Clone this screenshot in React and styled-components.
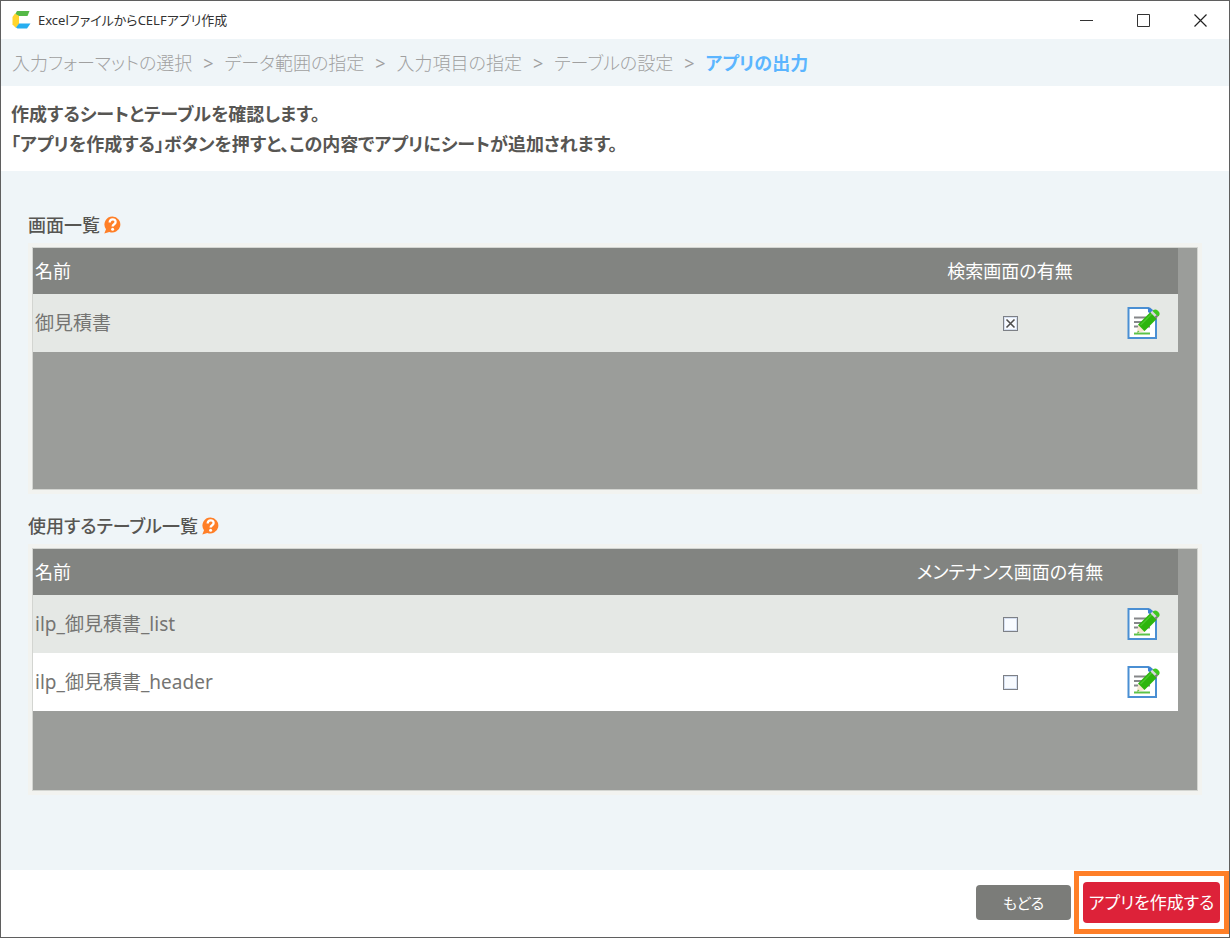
import { useState } from "react";
import styled, { createGlobalStyle } from "styled-components";

const COLOR = {
  FRAME: "#5f5f5f",
  WHITE: "#ffffff",
  PALE: "#eff5f8",
  MUTED: "#a0a0a0",
  ACTIVE: "#5bb5ff",
  TEXT: "#575653",
  CELL: "#757573",
  HEADER: "#828481",
  EMPTY: "#9b9d9a",
  ROW: "#e5e8e5",
  ORANGE: "#ff7f27",
  RED: "#dd2239",
  GRAY: "#7b7c79",
};

const GlobalStyle = createGlobalStyle`
  * {
    box-sizing: border-box;
  }
  body {
    margin: 0;
    font-family: "Noto Sans", "Noto Sans CJK JP", sans-serif;
    font-feature-settings: "palt";
    color: ${COLOR.TEXT};
  }
  button {
    font: inherit;
    font-feature-settings: inherit;
    border: 0;
    padding: 0;
    background: none;
    cursor: pointer;
  }
`;

const Window = styled.div`
  display: flex;
  flex-direction: column;
  min-height: 100vh;
  border: 1px solid ${COLOR.FRAME};
  background: ${COLOR.WHITE};
`;

const TitleBar = styled.header`
  display: flex;
  align-items: center;
  height: 38px;
  padding-left: 11px;
  gap: 7px;
`;

const Title = styled.h1`
  flex: 1;
  margin: 0;
  font-size: 13px;
  font-weight: 400;
  line-height: 20px;
  color: #333333;
`;

const WindowButton = styled.button`
  display: flex;
  align-items: center;
  justify-content: center;
  width: 57px;
  height: 36px;
`;

const WindowButtons = styled.div`
  display: flex;
`;

const Breadcrumb = styled.nav`
  display: flex;
  align-items: center;
  gap: 11px;
  height: 47px;
  padding: 0 11px;
  background: ${COLOR.PALE};
  font-size: 18px;
  line-height: 28px;
  color: ${COLOR.MUTED};
`;

const Step = styled.span`
  color: ${({ $active }) => ($active ? COLOR.ACTIVE : "inherit")};
  font-weight: ${({ $active }) => ($active ? 700 : 300)};
`;

const Message = styled.p`
  margin: 0;
  padding: 13px 10px 12px;
  font-size: 18px;
  font-weight: 700;
  line-height: 30px;
`;

const Main = styled.main`
  display: flex;
  flex: 1;
  flex-direction: column;
  gap: 18px;
  padding: 40px 27px;
  background: ${COLOR.PALE};
`;

const SectionTitle = styled.h2`
  display: flex;
  align-items: center;
  gap: 4px;
  margin: 0 0 4px;
  font-size: 18px;
  font-weight: 500;
  line-height: 28px;
`;

const Panel = styled.div`
  min-height: 251px;
  border: 4px solid #f2f3f0;
`;

const PanelBody = styled.div`
  min-height: 243px;
  padding-right: 19px;
  border: 1px solid #d3d5d1;
  background: ${COLOR.EMPTY};
`;

const Table = styled.table`
  width: 100%;
  border-collapse: collapse;
  table-layout: fixed;
  font-size: 18px;
  line-height: 28px;
`;

const HeadCell = styled.th`
  width: ${({ $width }) => $width || "auto"};
  height: 46px;
  padding: 0 2px;
  background: ${COLOR.HEADER};
  color: ${COLOR.WHITE};
  font-weight: 400;
  text-align: ${({ $align }) => $align || "left"};
  white-space: nowrap;
`;

const Row = styled.tr`
  background: ${COLOR.WHITE};
  &:nth-child(odd) {
    background: ${COLOR.ROW};
  }
`;

const Cell = styled.td`
  height: 58px;
  padding: 0 2px;
  color: ${COLOR.CELL};
  font-size: 19px;
`;

const CheckWrapper = styled.label`
  display: grid;
  width: 15px;
  margin: 0 auto;
  > * {
    grid-area: 1 / 1;
  }
  svg {
    pointer-events: none;
  }
`;

const CheckInput = styled.input`
  appearance: none;
  width: 15px;
  height: 15px;
  margin: 0;
  border: 1px solid #7d8086;
  background: #f8fbff;
  box-shadow: inset 0 0 0 1px #d5dff0;
`;

const EditButton = styled.button`
  display: flex;
  margin: 0 auto;
`;

const Footer = styled.footer`
  display: flex;
  align-items: center;
  justify-content: flex-end;
  gap: 3px;
  padding: 1px 0 3px;
`;

const Highlight = styled.div`
  padding: 6px 4px;
  border: 5px solid ${COLOR.ORANGE};
`;

const Button = styled.button`
  min-width: ${({ $primary }) => ($primary ? "137px" : "95px")};
  height: ${({ $primary }) => ($primary ? "41px" : "35px")};
  border-radius: 4px;
  background: ${({ $primary }) => ($primary ? COLOR.RED : COLOR.GRAY)};
  color: ${COLOR.WHITE};
  font-size: ${({ $primary }) => ($primary ? "17px" : "15px")};
  line-height: 28px;
`;

const steps = [
  "入力フォーマットの選択",
  "データ範囲の指定",
  "入力項目の指定",
  "テーブルの設定",
  "アプリの出力",
];

const sections = [
  {
    id: "screens",
    title: "画面一覧",
    option: "検索画面の有無",
    rows: [{ name: "御見積書", checked: true }],
  },
  {
    id: "tables",
    title: "使用するテーブル一覧",
    option: "メンテナンス画面の有無",
    rows: [
      { name: "ilp_御見積書_list", checked: false },
      { name: "ilp_御見積書_header", checked: false },
    ],
  },
];

const Logo = () => (
  <svg width="19" height="19" viewBox="0 0 19 19" aria-hidden="true">
    <path d="M5 0h12.500l-2 5H6.500L3 3.500z" fill="#55b947" />
    <path d="M3 2.500l4 2.500v8l-3 4L0.500 13.500V6z" fill="#ffd52e" />
    <path d="M7 12.500h11.500l-3.500 5H5.500L4 16.500z" fill="#27aef0" />
  </svg>
);

const HelpIcon = () => (
  <svg width="17" height="18" viewBox="0 0 17 18" aria-hidden="true">
    <path
      d="M8.500 0.500a8 8 0 1 1-3.200 15.400L0.300 17.500l1.700-4.300A8 8 0 0 1 8.500 0.500z"
      fill={COLOR.ORANGE}
    />
    <path
      d="M5.700 6.500c0-4.200 5.900-4.200 5.900-.5 0 2.400-3 2-3 4.500"
      fill="none"
      stroke="#fff"
      strokeWidth="2.300"
    />
    <circle cx="8.600" cy="13.200" r="1.500" fill="#fff" />
  </svg>
);

const EditIcon = () => (
  <svg width="34" height="34" viewBox="0 0 34 34" aria-hidden="true">
    <path d="M2.500 2H22l8 8v22H2.500z" fill="#fff" stroke="#4a8fd3" strokeWidth="2" />
    <path d="M22 1.500h2l3.500 3-2.500 3.500-3-2z" fill="#3f83d0" />
    <path d="M8 11.500h12M8 16h9M8 20.500h5M20 20.500h4" stroke="#858789" strokeWidth="1.800" />
    <path d="M8 27.500h16" stroke="#5cc248" strokeWidth="2" />
    <path d="M12.500 18.500l6.500 6.500-8.500 2z" fill="#f6e6cf" />
    <path d="M12.200 24.500l-1.700 2.500 3-1z" fill="#5cc248" />
    <path d="M12 18.500L24.500 6l6.500 6.500L18.500 25z" fill="#2db50d" />
    <path d="M14.500 19L26 7.500" stroke="#4bc72c" strokeWidth="1.500" />
    <path d="M24.500 6.500L26.500 4.500l6 6-2 2z" fill="#d6d9dc" />
    <path d="M28.500 11l2-2 1.500 1.500-2 2z" fill="#77797c" />
    <path d="M26.500 5l1-1q2-1.500 4.500.8t1.200 4.500L32 10.500z" fill="#3fc71f" />
  </svg>
);

const Check = ({ defaultChecked, labelledBy }) => {
  const [checked, setChecked] = useState(defaultChecked);
  return (
    <CheckWrapper>
      <CheckInput
        type="checkbox"
        checked={checked}
        aria-labelledby={labelledBy}
        onChange={(e) => setChecked(e.target.checked)}
      />
      {checked && (
        <svg width="15" height="15" viewBox="0 0 15 15" aria-hidden="true">
          <path d="M3.500 3.500l8 8M11.500 3.500l-8 8" stroke="#4d4d4d" strokeWidth="1.600" />
        </svg>
      )}
    </CheckWrapper>
  );
};

const ListSection = ({ id, title, option, rows }) => (
  <section>
    <SectionTitle>
      {title}
      <HelpIcon />
    </SectionTitle>
    <Panel>
      <PanelBody>
        <Table>
          <thead>
            <tr>
              <HeadCell>名前</HeadCell>
              <HeadCell id={`${id}-option`} $width="194px" $align="center">
                {option}
              </HeadCell>
              <HeadCell $width="71px" />
            </tr>
          </thead>
          <tbody>
            {rows.map(({ name, checked }, i) => (
              <Row key={name}>
                <Cell id={`${id}-${i}`}>{name}</Cell>
                <Cell>
                  <Check
                    defaultChecked={checked}
                    labelledBy={`${id}-${i} ${id}-option`}
                  />
                </Cell>
                <Cell>
                  <EditButton type="button" aria-label={`${name}を編集`}>
                    <EditIcon />
                  </EditButton>
                </Cell>
              </Row>
            ))}
          </tbody>
        </Table>
      </PanelBody>
    </Panel>
  </section>
);

const App = () => (
  <>
    <GlobalStyle />
    <Window>
      <TitleBar>
        <Logo />
        <Title>ExcelファイルからCELFアプリ作成</Title>
        <WindowButtons>
          <WindowButton type="button" aria-label="最小化">
            <svg width="13" height="13" viewBox="0 0 13 13">
              <path d="M0 6.500h13" stroke="#333" />
            </svg>
          </WindowButton>
          <WindowButton type="button" aria-label="最大化">
            <svg width="13" height="13" viewBox="0 0 13 13">
              <path d="M.5.500h12v12H.5z" fill="none" stroke="#333" />
            </svg>
          </WindowButton>
          <WindowButton type="button" aria-label="閉じる">
            <svg width="13" height="13" viewBox="0 0 13 13">
              <path d="M.5.500l12 12M12.500.500l-12 12" stroke="#222" strokeWidth="1.200" />
            </svg>
          </WindowButton>
        </WindowButtons>
      </TitleBar>
      <Breadcrumb>
        {steps.map((step, i) => [
          i > 0 && <span key={`${step}-sep`}>&gt;</span>,
          <Step key={step} $active={i === steps.length - 1}>
            {step}
          </Step>,
        ])}
      </Breadcrumb>
      <Message>
        作成するシートとテーブルを確認します。
        <br />
        「アプリを作成する」ボタンを押すと、この内容でアプリにシートが追加されます。
      </Message>
      <Main>
        {sections.map((section) => (
          <ListSection key={section.id} {...section} />
        ))}
      </Main>
      <Footer>
        <Button type="button">もどる</Button>
        <Highlight>
          <Button type="button" $primary>
            アプリを作成する
          </Button>
        </Highlight>
      </Footer>
    </Window>
  </>
);

export default App;
